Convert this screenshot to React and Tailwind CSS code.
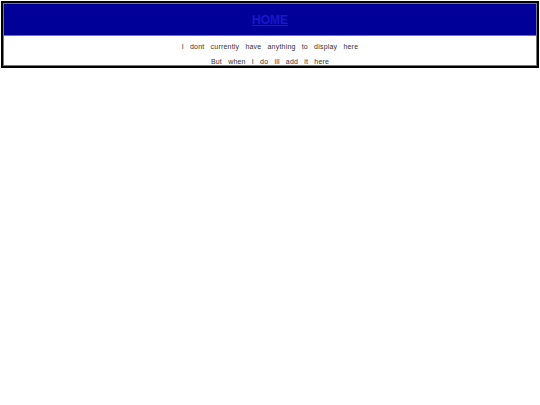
export default function App() {
  return (
    <div className="w-[540px] h-[405px] bg-white pt-[1px] px-[1px] antialiased" style={{ fontFamily: '"Liberation Sans", Arial, sans-serif' }}>
      <div className="border-2 border-black">
        <div className="border border-[#777]">
          <div className="h-[32px] bg-[#000099] border-b border-[#777] flex items-center justify-center">
            <span className="text-[12px] font-bold text-[#1818cc] underline">HOME</span>
          </div>
          <div className="h-[29px] pt-[3px] flex flex-col items-center text-[7px] text-[#333] tracking-[0.2px] [word-spacing:4px] leading-[15px]">
            <div>I dont currently have anything to display here</div>
            <div>But when I do ill add it here</div>
          </div>
        </div>
      </div>
    </div>
  );
}
